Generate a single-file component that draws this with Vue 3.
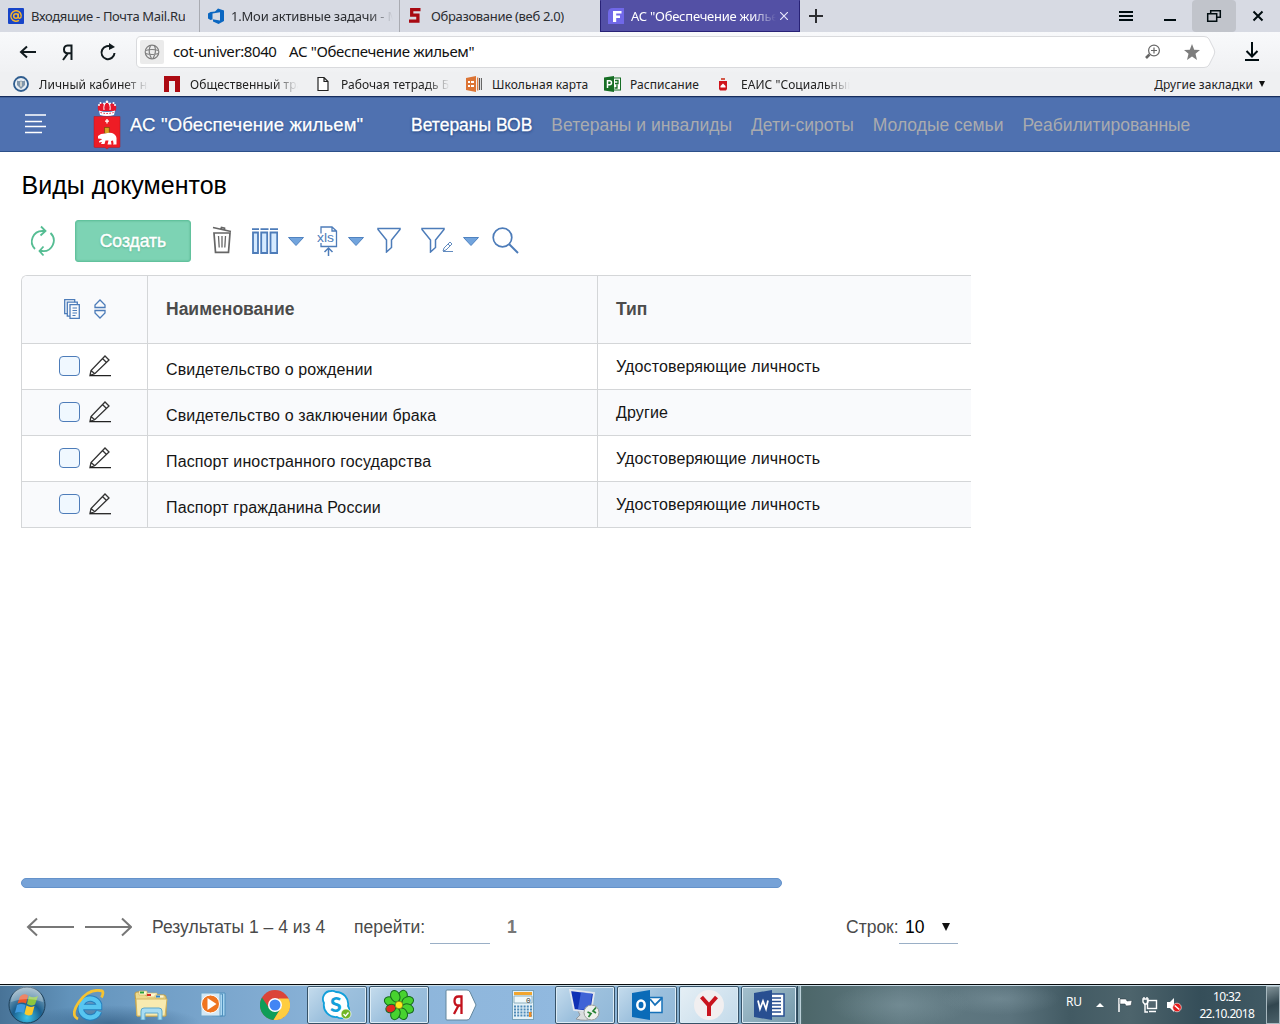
<script setup>
const rows = [
  ['Свидетельство о рождении', 'Удостоверяющие личность'],
  ['Свидетельство о заключении брака', 'Другие'],
  ['Паспорт иностранного государства', 'Удостоверяющие личность'],
  ['Паспорт гражданина России', 'Удостоверяющие личность'],
]
const nav = ['Ветераны ВОВ', 'Ветераны и инвалиды', 'Дети-сироты', 'Молодые семьи', 'Реабилитированные']
</script>

<template>
  <div class="screen">
    <div class="tabs">
      <div class="tab">
        <svg width="16" height="16" viewBox="0 0 16 16"><rect width="16" height="16" rx="1" fill="#1744c8" /><circle cx="8" cy="8" r="2.3" fill="none" stroke="#f5b52c" stroke-width="1.5" /><path d="M10.3 5.5V9q.2 1.5 1.6 1.2 1.4-.5 1.3-2.8A5.2 5.2 0 1 0 11 12.3" fill="none" stroke="#f5b52c" stroke-width="1.4" /></svg>
        <span class="tab-text t1">Входящие - Почта Mail.Ru</span>
      </div>
      <div class="tab">
        <svg width="16" height="16" viewBox="0 0 16 16"><path d="M0 5.500L2.500 4 7 3.500 10 .5l6 2v10.500L10.500 16 5 13.500v-2.200L2.500 12 0 10.500z" fill="#0b67c1" /><path d="M4.500 5.500l7.500-1.300v8.300L4.500 11.300z" fill="#d7dae3" /></svg>
        <span class="tab-text t2 fade">1.Мои активные задачи - М</span>
      </div>
      <div class="tab">
        <svg width="16" height="16" viewBox="0 0 16 16"><path d="M12.500 1.700H3.700v5.500h6.200v6H1" fill="none" stroke="#a80912" stroke-width="3.300" /></svg>
        <span class="tab-text t3">Образование (веб 2.0)</span>
      </div>
      <div class="tab active">
        <svg width="16" height="16" viewBox="0 0 16 16"><path d="M0 16V5q0-5 5-5h11v16z" fill="#7068e8" /><path d="M5 3h8.500v2.600H8.200v2H12v2.500H8.200V14H5z" fill="#fff" /></svg>
        <span class="tab-text t4 fade">АС "Обеспечение жильем"</span>
        <svg class="tab-x" width="8" height="8" viewBox="0 0 8 8"><path d="M0 0l8 8M8 0L0 8" stroke="#e6e5fb" stroke-width="1.200" /></svg>
      </div>
      <svg class="plus" width="14" height="14" viewBox="0 0 14 14"><path d="M7 0v14M0 7h14" stroke="#2c2d31" stroke-width="2" /></svg>
      <div class="win">
        <svg width="44" height="32" viewBox="0 0 44 32"><path d="M15 12h14M15 16h14M15 20h14" stroke="#000c10" stroke-width="2" /></svg>
        <svg width="44" height="32" viewBox="0 0 44 32"><path d="M16 20h12" stroke="#000c10" stroke-width="2" /></svg>
        <svg class="restore" width="44" height="32" viewBox="0 0 44 32"><path d="M18.700 13.500v-2.800h9.600v6.600H25M15.700 13.700h9v7.600h-9z" fill="none" stroke="#000c10" stroke-width="1.500" /></svg>
        <svg width="44" height="32" viewBox="0 0 44 32"><path d="M17.500 11.500l9 9M26.500 11.500l-9 9" stroke="#000c10" stroke-width="2" /></svg>
      </div>
    </div>

    <div class="address">
      <svg width="136" height="40" viewBox="0 0 136 40"><g fill="none" stroke="#111a1e" stroke-width="2"><path d="M21 20h15M27 14.500L21 20l6 5.500" /><path d="M71.500 28V13.500h-4q-3.500.2-3.500 4 0 3.700 3.500 3.700h4M68 21.200L63 28" /><path d="M112 15.500A6.500 6.500 0 1 0 114.500 21" /></g><path d="M109 11v7l6-3z" fill="#111a1e" /></svg>
      <div class="url">
        <svg class="urlbg" width="1080" height="32" viewBox="0 0 1080 32"><path d="M5 .5h1063q3.500 0 5 2.500l5 10q1.500 3 0 6l-5 10q-1.500 2.500-5 2.500H5q-4.500 0-4.500-4.500V5Q.5.500 5 .5z" fill="#fff" stroke="#d9dadd" /></svg>
        <div class="globe"><svg width="24" height="24" viewBox="0 0 24 24"><g fill="none" stroke="#7d7d7d" stroke-width="1.200"><circle cx="12" cy="12" r="6.800" /><path d="M10.500 5.500q-3 6 1 13M14.500 5.500q2.500 6-1.500 13M5.500 10.500q6.500-2 13 0M5.500 13.500q6.500 2 13 0" /></g></svg></div>
        <span class="host">cot-univer:8040</span><span class="title">АС "Обеспечение жильем"</span>
        <svg class="zoomi" width="16" height="16" viewBox="0 0 16 16"><circle cx="9" cy="6.500" r="5.400" fill="none" stroke="#666" stroke-width="1.200" /><path d="M9 3.500v6M6 6.500h6" stroke="#666" stroke-width="1.200" /><path d="M1 14l3.500-3.500" stroke="#666" stroke-width="2.600" /></svg>
        <svg class="star" width="18" height="18" viewBox="0 0 18 18"><path d="M9 1l2.200 5.700 5.800.3-4.500 3.800L14 17l-5-3.400L4 17l1.500-6.200L1 7l5.800-.3z" fill="#7d7d7d" /></svg>
      </div>
      <svg class="dl" width="16" height="20" viewBox="0 0 16 20"><path d="M8 0v14M2.500 9L8 14.500 13.500 9M1 18h14" fill="none" stroke="#000c10" stroke-width="2" /></svg>
    </div>

    <div class="bookmarks">
      <div class="bm w1"><svg width="16" height="16" viewBox="0 0 16 16"><circle cx="8" cy="8" r="7" fill="#e8eef4" stroke="#2f5d8f" stroke-width="1.800" /><path d="M4 4.500q2 1 4 0 2 1 4 0V9l-4 4-4-4z" fill="#8096ab" /><path d="M8 5.500v5" stroke="#e9e4d8" stroke-width="1.500" /></svg><span class="fade b1">Личный кабинет на</span></div>
      <div class="bm w2"><svg width="16" height="16" viewBox="0 0 16 16"><path d="M0 0h16v16h-5V5H5v11H0z" fill="#ac0a12" /></svg><span class="fade b2">Общественный тра</span></div>
      <div class="bm w3"><svg width="12" height="16" viewBox="0 0 12 16"><path d="M1 1.500h6l4 4v9H1zM7 1.500v4h4" fill="#fff" stroke="#222" stroke-width="1.200" /></svg><span class="fade b3">Рабочая тетрадь Б</span></div>
      <div class="bm w4"><svg width="16" height="16" viewBox="0 0 16 16"><path d="M0 2l10-2v16L0 14z" fill="#dc7435" /><path d="M2 6h2M5 6h3M2 10h2M5 10h3" stroke="#fff" stroke-width="2" /><path d="M11.700 1.500v13" stroke="#dc7435" stroke-width="1.200" /><path d="M13.500 2v12M15.400 2v12" stroke="#555" /></svg><span class="b4">Школьная карта</span></div>
      <div class="bm w5"><svg width="17" height="16" viewBox="0 0 17 16"><rect x="9" y="2" width="7.500" height="12" fill="#fff" stroke="#176e25" /><path d="M0 1.500L10 0v16L0 14.500z" fill="#176e25" /><path d="M3.500 12V4.800h2q2 0 2 2t-2 2h-2" fill="none" stroke="#fff" stroke-width="1.500" /><path d="M11 4.500h3v3h-3M13 8.500V12h-2.500" fill="none" stroke="#176e25" stroke-width="1.300" /></svg><span class="b5">Расписание</span></div>
      <div class="bm w6"><svg width="10" height="14" viewBox="0 0 10 14"><path d="M3 1h4v2H3z" fill="#d35a4a" /><path d="M1 4h8v8l-1 1.500H2L1 12z" fill="#cf141c" /><path d="M5 6.500L7.500 9v1.500h-5V9z" fill="#fff" /></svg><span class="fade b6">ЕАИС "Социальный</span></div>
      <div class="bm other"><span class="b7">Другие закладки</span><svg width="6" height="6" viewBox="0 0 6 6"><path d="M0 0h6L3 6z" fill="#111" /></svg></div>
    </div>

    <header class="header">
      <svg class="burger" width="22" height="20" viewBox="0 0 22 20"><path d="M0 1h21M0 7.500h17M0 12.500h21M0 18.500h17" stroke="#fff" stroke-width="1.500" /></svg>
      <svg class="coat" width="28" height="50" viewBox="0 0 28 50">
        <path d="M5.500 11q-2-5 1-7 3-2 5 1l2.500-3 2.500 3q2-3 5-1 3 2 1 7z" fill="#e6172b" /><path d="M11 10Q10 4 14 2q4 2 3 8" fill="#e6172b" stroke="#fff" stroke-width="1" />
        <g fill="#fff"><circle cx="14" cy="1.600" r="1.200" /><circle cx="6" cy="5" r="1" /><circle cx="7.500" cy="3" r="1" /><circle cx="11" cy="3.500" r="1" /><circle cx="17" cy="3.500" r="1" /><circle cx="20.500" cy="3" r="1" /><circle cx="22" cy="5" r="1" /></g>
        <path d="M6 10.500q8 3 16 0l-1 4.500q-7 2-14 0z" fill="#fff" /><path d="M7.500 12.500q6.500 2 13 0" stroke="#e6172b" stroke-width="1" stroke-dasharray="1.500 1.500" fill="none" />
        <path d="M1 16.500h26V46.500q0 1-1 1H16l-2 1.500L12 47.500H2q-1 0-1-1z" fill="#ee1c25" stroke="#b51622" stroke-width=".5" />
        <path d="M14 19v4.500M12 21.200h4" stroke="#fff" stroke-width="1.300" /><rect x="11.700" y="27.500" width="4.500" height="6" fill="#d9a521" stroke="#6e4a0b" stroke-width=".7" />
        <path d="M5 36l3-2 4-.5q6-1.500 9 .5 3 2 2.500 6v4.500h-3.500l.5-1-.5-3-2 .5.500 3.500h-4l1-4h-3l-1 3.500H8l1-2-3 .5v-1.300l3-2V39l-4-.5z" fill="#fff" />
      </svg>
      <span class="brand">АС "Обеспечение жильем"</span>
      <nav class="nav"><a v-for="(n, i) in nav" :key="n" :class="{ on: i === 0 }">{{ n }}</a></nav>
    </header>

    <main class="main">
      <h1>Виды документов</h1>
      <div class="toolbar">
        <svg width="53" height="42" viewBox="0 0 53 42"><g fill="none" stroke="#55bd93" stroke-width="1.800"><path d="M13 29A10.500 10.500 0 0 1 20.500 11h3M19 6.500l4.500 4.500-5 4.500" /><path d="M28.500 13A10.500 10.500 0 0 1 20 31h-2.500M21.500 26.500L17.500 31l4 4.500" /></g></svg>
        <button class="create">Создать</button>
        <svg class="trash" width="20" height="28" viewBox="0 0 20 28"><g fill="none" stroke="#666" stroke-width="1.300"><path d="M1 1.500l18 4M9 3l.5-1.500 3 .7v1.500M2 7h16l-1.500 19.300h-13z" stroke-width="1.700" /><path d="M6.500 10l.7 11.500M10 10v11.500M13.500 10l-.7 11.500" /></g></svg>
        <svg class="cols" width="26" height="26" viewBox="0 0 26 26"><path d="M0 1.200h7M8.500 1.200h8M18 1.200h8" stroke="#4d7cb9" stroke-width="1.800" /><g fill="#d5eaff" stroke="#4d7cb9" stroke-width="1.800"><path d="M1 4.500h5v20.500H1zM9.200 4.500h6v20.500h-6zM18.500 4.500h6.700v20.500h-6.700z" /></g></svg>
        <svg class="tri" width="16" height="9" viewBox="0 0 16 9"><path d="M.5.500h15L8 8.500z" fill="#72a4dd" stroke="#5083c0" /></svg>
        <svg class="xls" width="22" height="30" viewBox="0 0 22 30"><path d="M4 7.500V1h11l4.500 4v15.500H4v-3.500M15 1v4h4.500" fill="none" stroke="#4d7cb9" stroke-width="1.300" /><text x="0" y="16" font-family="Liberation Sans, sans-serif" font-size="13" textLength="17" lengthAdjust="spacingAndGlyphs" fill="#4d7cb9">xls</text><path d="M11.500 30v-8M7.500 26l4-4 4 4" fill="none" stroke="#4d7cb9" stroke-width="1.500" /></svg>
        <svg class="tri" width="16" height="9" viewBox="0 0 16 9"><path d="M.5.500h15L8 8.500z" fill="#72a4dd" stroke="#5083c0" /></svg>
        <svg class="fun" width="24" height="26" viewBox="0 0 24 26"><path d="M1 1.500h22v1L14.500 13v7.500L9.500 25V13L1 2.500z" fill="none" stroke="#4d7cb9" stroke-width="1.500" /></svg>
        <svg class="fun2" width="32" height="26" viewBox="0 0 32 26"><path d="M1 1.500h22v1L14.500 13v7.500L9.500 25V13L1 2.500z" fill="none" stroke="#4d7cb9" stroke-width="1.500" /><path d="M22 24l1-3 6-6 2 2-6 6zM22 24.500h10M27 17l2 2" fill="none" stroke="#628bbf" /></svg>
        <svg class="tri" width="16" height="9" viewBox="0 0 16 9"><path d="M.5.500h15L8 8.500z" fill="#72a4dd" stroke="#5083c0" /></svg>
        <svg class="search" width="27" height="27" viewBox="0 0 27 27"><path d="M17 17l9 9" stroke="#4d7cb9" stroke-width="2" /><circle cx="10.500" cy="10.500" r="9.300" fill="none" stroke="#4d7cb9" stroke-width="1.700" /></svg>
      </div>

      <div class="table">
        <div class="row head">
          <div class="c1">
            <svg class="docs" width="16" height="20" viewBox="0 0 16 20"><g fill="#f9fafc" stroke="#4d7cb9" stroke-width="1.300"><path d="M.7.700h10v14H.7z" /><path d="M3.300 3.200h10v14h-10z" /><path d="M6 5.700h9.300v13.600H6z" /><path d="M8.500 9h4.500M8.500 11.500h4.500M8.500 14h4.500M8.500 16.500h3" stroke-width="1" /></g></svg>
            <svg width="12" height="20" viewBox="0 0 12 20"><path d="M1 8.500V6l5-5 5 5v2.500zM1 11.500h10V14l-5 5-5-5z" fill="none" stroke="#4d7cb9" stroke-width="1.300" /></svg>
          </div>
          <div class="c2">Наименование</div><div class="c3">Тип</div>
        </div>
        <div v-for="r in rows" :key="r[0]" class="row">
          <div class="c1">
            <i class="box"></i>
            <svg class="pen" width="22" height="22" viewBox="0 0 22 22"><path d="M1 20.500l1-5L16 1l4 4L6 18.500zM2 15.500l4 3.500M13.500 3.500l4 4" fill="none" stroke="#333" stroke-width="1.300" /><path d="M1 18v3h3z" fill="#333" /><path d="M1 20.700h21" stroke="#222" stroke-width="1.300" /></svg>
          </div>
          <div class="c2">{{ r[0] }}</div><div class="c3">{{ r[1] }}</div>
        </div>
      </div>

      <div class="scroll"></div>
      <div class="pager">
        <svg width="108" height="20" viewBox="0 0 108 20"><path d="M50 10H4M13 1.500L4 10l9 8.500" fill="none" stroke="#777" stroke-width="2" /><path d="M61 10h46M98 1.500l9 8.500-9 8.500" fill="none" stroke="#777" stroke-width="2" /></svg>
        <span class="res">Результаты 1 – 4 из 4</span><span class="go">перейти:</span><i class="line"></i><b class="one">1</b>
        <span class="rowsl">Строк:</span><span class="sel">10<svg width="8" height="8" viewBox="0 0 8 8"><path d="M0 0h8L4 8z" fill="#111" /></svg></span>
      </div>
    </main>

    <footer class="task">
      <div class="slot s0"><svg width="38" height="38" viewBox="0 0 38 38"><defs><radialGradient id="orb" cx=".5" cy=".85" r=".9"><stop offset="0" stop-color="#3cc5ea" /><stop offset=".45" stop-color="#1b5f8e" /><stop offset="1" stop-color="#a6bdca" /></radialGradient></defs><circle cx="19" cy="19" r="18" fill="url(#orb)" stroke="#1d3e57" /><path d="M12 10.500q4-4 8-1l-2 8q-4-2-8.500 0z" fill="#e8562b" /><path d="M21 10q4 2.500 9 0l-3 8.500q-4 2-8-.5z" fill="#8dc63f" /><path d="M9 19q4-2 8.500 0l-2 8q-4-2-8.500 0z" fill="#3f9ae0" /><path d="M18.500 19.500q4 2.500 8 .5l-2.300 8.500q-4 2-7.700-.5z" fill="#fcc92c" /><path d="M3 16A16 16 0 0 1 35 16Q19 10 3 16" fill="#fff" opacity=".28" /></svg></div>
      <div class="slot s1"><svg width="32" height="32" viewBox="0 0 32 32"><path d="M26 22.500A9.500 9.500 0 1 1 26 15.500v2.500H10" fill="none" stroke="#257fbe" stroke-width="6.500" /><path d="M26 22.500A9.500 9.500 0 1 1 26 15.500v2.500H10" fill="none" stroke="#57c5f1" stroke-width="4.500" /><path d="M5 30Q-3 26 6 13T27 1.500q5 0 1.500 7" fill="none" stroke="#f6c331" stroke-width="2.800" /></svg></div>
      <div class="slot s2"><svg width="34" height="30" viewBox="0 0 34 30"><path d="M1 4q0-2 2-2h6l2 3h19q2 0 2 2v19H3z" fill="#edda8d" stroke="#bd9a42" /><path d="M5 1h8v4H5zM13 3h10v4H13zM21 5h9v3h-9z" fill="#fff7d0" stroke="#d2b45f" stroke-width=".6" /><path d="M6 1.500h4v2H6z" fill="#29a03a" /><path d="M13 4h4v2h-4z" fill="#d82c25" /><path d="M22 5.500h4v2h-4z" fill="#3186cc" /><path d="M2 9h31l-2 17H3z" fill="#f8eab0" stroke="#d2b45f" /><path d="M7 30V21q0-3 3-3h15q3 0 3 3v9h-4v-7H11v7z" fill="#a7dcf2" stroke="#5ca8cf" /></svg></div>
      <div class="slot s3"><svg width="28" height="26" viewBox="0 0 28 26"><path d="M16 1h9v23h-9zM12 2h10.500v22H12z" fill="#a9d7f2" stroke="#5090bd" /><path d="M1 1h19v23H1z" fill="#d3e8f5" stroke="#6fa5c9" /><circle cx="10.500" cy="12" r="9" fill="#ef7420" stroke="#fff" stroke-width="1" /><path d="M7.500 6v12l9-6z" fill="#fff" /></svg></div>
      <div class="slot s4"><svg width="30" height="30" viewBox="0 0 30 30"><circle cx="15" cy="15" r="15" fill="#db4437" /><path d="M2 7.500A15 15 0 0 0 13.500 30L21 18H9z" fill="#0f9d58" /><path d="M28.500 8.500A15 15 0 0 1 13.500 30L21.500 17l-3-8.500z" fill="#ffcd40" /><circle cx="15" cy="15" r="7" fill="#fff" /><circle cx="15" cy="15" r="5.500" fill="#4285f4" /></svg></div>
      <div class="slot app a1"><svg width="30" height="30" viewBox="0 0 30 30"><path d="M9 1a8 8 0 0 1 5 1 12 12 0 0 1 12 14 8 8 0 0 1-11 11A12 12 0 0 1 2 13 8 8 0 0 1 9 1z" fill="#fff" stroke="#129fda" stroke-width="1.800" /><text x="8" y="21.500" font-family="Lato, sans-serif" font-weight="900" font-size="21" fill="#129fda">S</text><circle cx="24" cy="24" r="5" fill="#72b626" stroke="#fff" stroke-width=".7" /><path d="M21.500 24l2 2 3-3.500" fill="none" stroke="#fff" stroke-width="1.300" /></svg></div>
      <div class="slot app a2"><svg width="32" height="32" viewBox="0 0 32 32"><g stroke="#17691e"><g fill="#47d32f"><ellipse v-for="a in [22, 67, 112, 157, 202, 292, 337]" :key="a" cx="16" cy="6.500" rx="4.500" ry="6" :transform="`rotate(${a} 16 16)`" /></g><ellipse cx="16" cy="7" rx="4" ry="5" transform="rotate(247 16 16)" fill="#e22a22" /></g><circle cx="16" cy="16" r="3.800" fill="#ffe81d" stroke="#80901b" /></svg></div>
      <div class="slot s5"><svg width="32" height="32" viewBox="0 0 32 32"><path d="M2 1h20q2 0 3 2l6 13-6 13q-1 2-3 2H2q-1 0-1-1V2q0-1 1-1z" fill="#fff" stroke="#62869d" /><path d="M16.500 25V7.500h-3q-4 0-4 4.500t4 4.500h3M13.500 16.500L9 25" fill="none" stroke="#c3121c" stroke-width="2.300" /></svg></div>
      <div class="slot s6"><svg width="22" height="30" viewBox="0 0 22 30"><rect x=".5" y=".5" width="21" height="29" fill="#e3f1f8" stroke="#77a2ba" /><path d="M2 2h18v3H2z" fill="#f2a62e" /><path d="M2 6h18v7H2z" fill="#eef8fb" stroke="#8eb0bf" /><text x="14" y="12.500" font-family="Liberation Mono, monospace" font-size="8" fill="#333">0</text><path d="M2 16.500h18M2 19.500h18M2 22.500h18M2 25.500h18" stroke="#4f8bb8" stroke-width="2" stroke-dasharray="2 1.200" /><path d="M17 22h2.500v5H17z" fill="#ee8c23" /></svg></div>
      <div class="slot app a3"><svg width="34" height="32" viewBox="0 0 34 32"><path d="M10 22h10l2 5 4 2q-8 4-18 1l4-4z" fill="#d9dcde" stroke="#91999f" /><path d="M2 1l24 3-3 19-17-2z" fill="#1031b5" stroke="#e3e7ee" stroke-width="1.800" /><path d="M13 3l11 1.500L22 21l-12-1z" fill="#5f86ed" opacity=".6" /><circle cx="23.500" cy="23.500" r="7.500" fill="#edf0ed" stroke="#9b9f9b" /><path d="M19.500 23l3.500 1.500-2.500 3.500M28 18.500l-3 3.500 3 2" fill="none" stroke="#268335" stroke-width="1.700" /></svg></div>
      <div class="slot app a4"><svg width="31" height="30" viewBox="0 0 31 30"><path d="M16 7.500h14v15H16z" fill="#fff" stroke="#1671b9" stroke-width="1.500" /><path d="M18 9l5 6 7-7" fill="none" stroke="#1671b9" stroke-width="1.800" /><path d="M0 3l18-3v30L0 27z" fill="#0a6bb8" /><ellipse cx="9" cy="15" rx="3.700" ry="4.500" fill="none" stroke="#fff" stroke-width="2.500" /></svg></div>
      <div class="slot app a5"><svg width="30" height="30" viewBox="0 0 30 30"><circle cx="15" cy="15" r="15" fill="#f1eff0" /><path d="M7.500 7l7.500 8.500L22.500 7M15 15v11" fill="none" stroke="#c8141e" stroke-width="4" /></svg></div>
      <div class="slot app a6"><svg width="31" height="30" viewBox="0 0 31 30"><path d="M16 4h14v22H16z" fill="#fff" stroke="#284f91" stroke-width="1.500" /><path d="M17 8h10M17 11.500h10M17 15h10M17 18.500h10M17 22h10" stroke="#284f91" stroke-width="1.500" /><path d="M0 3l18-3v30L0 27z" fill="#284f91" /><path d="M4 10.500l2 8.500 3-8 3 8 2-8.500" fill="none" stroke="#fff" stroke-width="1.800" /></svg></div>
      <div class="edge"></div>
      <span class="lang">RU</span>
      <svg class="up" width="8" height="4" viewBox="0 0 8 4"><path d="M0 4l4-4 4 4z" fill="#fff" /></svg>
      <svg class="flag" width="16" height="16" viewBox="0 0 16 16"><path d="M2 1v14" stroke="#fff" stroke-width="1.500" /><path d="M3 2h6l1 2 5-.5-1 5-5 .5-1-2H3z" fill="#fff" stroke="#223038" stroke-width=".5" /></svg>
      <svg class="net" width="16" height="16" viewBox="0 0 16 16"><rect x="5.500" y="3.500" width="9" height="8" fill="#52656e" stroke="#fff" stroke-width="1.400" /><path d="M7 14.500h7M3 7v8h3M1 2h5v3L4.500 7h-2L1 5zM2 0v2M5 0v2" fill="none" stroke="#fff" stroke-width="1.400" /></svg>
      <svg class="snd" width="16" height="16" viewBox="0 0 16 16"><path d="M1 5h3l4-4v14l-4-4H1z" fill="#fff" /><circle cx="11" cy="10.500" r="4.300" fill="#e51c1c" stroke="#fff" stroke-width=".6" /><path d="M8.700 8.500l4.600 4" stroke="#fff" stroke-width="1.500" /></svg>
      <div class="clock"><span>10:32</span><span>22.10.2018</span></div>
      <div class="desk"></div>
    </footer>
  </div>
</template>

<style>
body { margin: 0; background: #fff; overflow: hidden; }
</style>
<style scoped>
* { box-sizing: border-box; }
svg { display: block; flex: none; }
.screen { width: 1280px; height: 1024px; display: flex; flex-direction: column; background: #fff; font-family: "Liberation Sans", sans-serif; overflow: hidden; white-space: nowrap; }
.tabs { height: 32px; flex: none; background: #d7dae3; display: flex; align-items: center; font: 13px "Noto Sans", sans-serif; color: #2b2d31; }
.tab { width: 200px; height: 32px; display: flex; align-items: center; padding-left: 8px; gap: 7px; border-right: 1px solid #a9abb2; }
.tab:nth-child(3) { border-color: #d7dae3; }
.tab.active { background: #5350a5; border: 1px solid #282276; border-top-color: #5350a5; color: #fff; padding-left: 7px; }
.tab-text { overflow: hidden; line-height: 20px; }
.t1 { letter-spacing: -.33px; }
.t2 { width: 162px; letter-spacing: -.2px; }
.t3 { letter-spacing: -.33px; }
.t4 { width: 145px; letter-spacing: -.25px; }
.fade { mask-image: linear-gradient(90deg, #000 calc(100% - 24px), transparent); }
.tab-x { margin-left: -3px; }
.plus { margin-left: 9px; }
.win { margin-left: auto; display: flex; }
.restore { background: #c1c4cb; border-radius: 4px; }
.address { height: 40px; flex: none; display: flex; background: linear-gradient(#f8f9fb, #f0f1f3); align-items: center; }
.url { width: 1080px; height: 32px; display: flex; align-items: center; position: relative; font: 15px "Noto Sans", sans-serif; color: #111; }
.urlbg { position: absolute; left: 0; top: 0; }
.url > :not(.urlbg) { position: relative; }
.url > span { margin-top: -2px; }
.globe { margin-left: 4px; background: #ebebeb; border-radius: 2px; }
.host { margin-left: 9px; width: 116px; letter-spacing: -.4px; }
.title { letter-spacing: -.36px; }
.zoomi { margin-left: auto; }
.star { margin: 0 15px 0 22px; }
.dl { margin-left: 28px; }
.bookmarks { height: 24px; flex: none; display: flex; align-items: center; background: #eff0f2; font: 12px/18px "Noto Sans", sans-serif; color: #222; padding-left: 13px; letter-spacing: .05px; }
.bm { display: flex; align-items: center; }
.bm span { overflow: hidden; padding-top: 1px; }
.w1 { width: 151px; gap: 10px; } .b1 { width: 109px; }
.w2 { width: 153px; gap: 10px; } .b2 { width: 108px; }
.w3 { width: 149px; gap: 12px; } .b3 { width: 109px; }
.w4 { width: 138px; gap: 10px; }
.w5 { width: 114px; gap: 9px; }
.w6 { gap: 13px; } .b6 { width: 109px; }
.other { margin-left: auto; margin-right: 15px; gap: 6px; }
.header { height: 56px; flex: none; background: #4f71b0; border-top: 1px solid #152c5e; border-bottom: 1px solid #2d5089; box-shadow: inset 0 1px #416098; display: flex; align-items: center; font-size: 18px; color: #fff; text-shadow: 0 1px 2px #294b87; }
.burger { margin-left: 25px; }
.coat { margin: 1px 0 0 46px; }
.brand { margin-left: 9px; width: 281px; font-size: 18.5px; letter-spacing: .16px; padding-top: 1px; -webkit-text-stroke: .25px #fff; }
.nav { display: flex; gap: 19px; color: #aaabae; text-shadow: none; font-size: 17.500px; padding-top: 3px; }
.nav .on { color: #fff; text-shadow: 0 1px 3px #173975; -webkit-text-stroke: .3px #fff; }
.main { flex: 1; display: flex; flex-direction: column; }
h1 { font: 25px/28px "Liberation Sans", sans-serif; margin: 19px 0 0 21.500px; color: #000; }
.toolbar { margin: 21px 0 0 22px; height: 42px; display: flex; align-items: center; }
.create { width: 116px; height: 42px; border: 1px solid #62c29d; border-radius: 3px; background: #7dd3b4; color: #fff; font: 17.500px "Liberation Sans", sans-serif; padding: 0; box-shadow: inset 0 0 2px #53b48f; -webkit-text-stroke: .4px #fff; text-shadow: 0 1px 2px #51ad8b; }
.trash { margin: -2px 0 0 21px; } .cols { margin-left: 20px; } .tri { margin-left: 10px; }
.xls { margin-left: 13px; } .xls + .tri { margin-left: 9px; }
.fun { margin: -2px 0 0 13px; } .fun2 { margin: -2px 0 0 20px; } .search { margin: -2px 0 0 13px; }
.table { width: 950px; margin: 13px 0 0 21px; border: 1px solid #d4d6d8; border-right: 0; border-bottom: 0; border-top-left-radius: 6px; overflow: hidden; }
.row { height: 46px; display: flex; border-bottom: 1px solid #d4d6d8; font-size: 16px; letter-spacing: .13px; color: #151515; }
.row:nth-child(odd) { background: #f9fafc; }
.head { height: 68px; font-weight: bold; font-size: 17.500px; letter-spacing: 0; color: #4b4b4b; }
.row > div { display: flex; align-items: center; }
.row > .c1 { width: 126px; border-right: 1px solid #d4d6d8; padding-left: 37px; padding-bottom: 2px; }
.c2 { width: 450px; border-right: 1px solid #d4d6d8; padding-left: 18px; }
.c3 { padding-left: 18px; }
.row:not(.head) .c2 { padding-top: 6px; }
.row.head > .c1 { padding-left: 42px; }
.docs { margin-right: 14px; }
.box { width: 21px; height: 20px; border: 1px solid #4d7cb9; border-radius: 4px; background: #f0f8ff; }
.pen { margin-left: 9px; }
.scroll { width: 761px; height: 10px; margin: 350px 0 0 21px; border-radius: 5px; background: #76a2d7; border: 1px solid #6492ca; }
.pager { height: 36px; margin: 20px 0 0 24px; display: flex; align-items: flex-start; font-size: 17.500px; line-height: 38px; color: #4a4a4a; }
.pager > svg { margin-top: 9px; }
.res { margin-left: 20px; width: 202px; } .go { width: 76px; }
.line { width: 60px; height: 36px; border-bottom: 1px solid #9aafc6; }
.one { margin-left: 17px; width: 339px; color: #777; }
.rowsl { width: 53px; }
.sel { width: 59px; height: 36px; border-bottom: 1px solid #9aafc6; display: flex; align-items: center; padding: 3px 0 0 6px; gap: 18px; color: #000; }
.task { height: 40px; flex: none; display: flex; align-items: center; border-top: 1px solid #080b0d; box-shadow: inset 0 1px #c9dce6; background: radial-gradient(ellipse 70px 22px at 900px 20px, #93abb455, transparent), radial-gradient(ellipse 60px 16px at 1000px 14px, #93abb455, transparent), radial-gradient(ellipse 90px 18px at 110px 38px, #1f486d88, transparent), linear-gradient(90deg, #487397 0, #6293bb 70px, #709ec6 150px, #8cb4d9 340px, #91b9df 560px, #7faac8 740px, #6f929f 795px, #4c6669 803px, #617a82 900px, #5b737d 1010px, #425a63 1070px, #4d646c 1130px, #354e59 1200px, #435c66 1280px); color: #fff; font-family: "Noto Sans", sans-serif; }
.slot { height: 38px; display: flex; align-items: center; justify-content: center; flex: none; }
.s0 { width: 54px; } .s1 { width: 70px; } .s2 { width: 55px; } .s3 { width: 65px; } .s4 { width: 62px; }
.s5 { width: 61px; padding-right: 2px; } .s6 { width: 62px; margin-right: 1px; }
.s2 { margin-right: 2px; padding-right: 2px; }
.s4 { margin-left: -2px; margin-right: 2px; }
.app { width: 60px; margin-right: 2px; border: 1px solid #d9edf8; outline: 1px solid #365268; outline-offset: -1px; box-shadow: inset 0 0 0 1px #dcecf6; border-radius: 2px; background: linear-gradient(135deg, #c5dced, #9cc0dd 50%, #91b8d8); }
.a1 { margin-left: -1px; }
.a5 { background: linear-gradient(135deg, #e5eff5, #c3daea); }
.a6 { width: 56px; background: linear-gradient(135deg, #a4c0cd, #7599ab); }
.edge { width: 4px; height: 38px; border-right: 1px solid #bbcfd7; border-left: 1px solid #2b4656; margin-left: -2px; background: #85a4b2; }
.lang { margin-left: 265px; width: 31px; font-size: 12px; letter-spacing: -.1px; margin-top: -6px; }
.flag { margin-left: 13px; } .net { margin-left: 9px; } .snd { margin-left: 8px; }
.clock { width: 80px; margin-left: 5px; display: flex; flex-direction: column; align-items: center; font-size: 12px; line-height: 17px; letter-spacing: -.65px; }
.desk { width: 14px; height: 38px; border: 1px solid #a7b8bf; background: linear-gradient(160deg, #819298, #31464f 50%, #4a6069); margin-left: auto; }
</style>
